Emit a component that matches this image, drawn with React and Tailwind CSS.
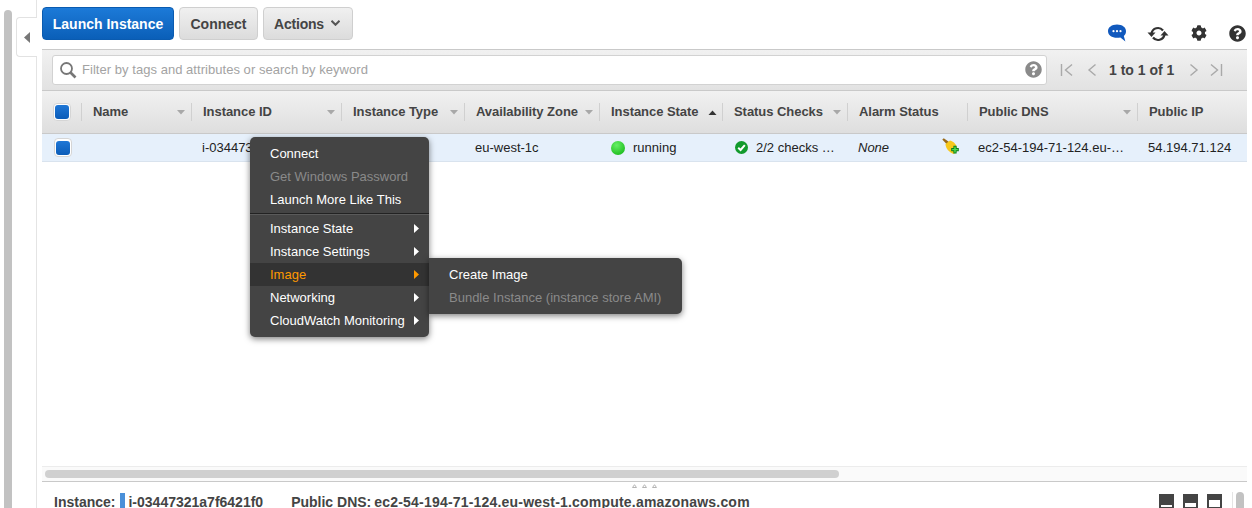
import React from "react";
import { FaCog, FaQuestionCircle } from "react-icons/fa";

const columns = [
  { label: "Name", w: "w-[110px]", sort: true },
  { label: "Instance ID", w: "w-[150px]", sort: true },
  { label: "Instance Type", w: "w-[123px]", sort: true },
  { label: "Availability Zone", w: "w-[135px]", sort: true },
  { label: "Instance State", w: "w-[123px]", sort: "up" },
  { label: "Status Checks", w: "w-[125px]", sort: true },
  { label: "Alarm Status", w: "w-[120px]" },
  { label: "Public DNS", w: "w-[170px]", sort: true },
  { label: "Public IP", w: "w-[110px]", last: true },
];

function Check({ outer }) {
  return (
    <div className={`${outer} flex items-center justify-center rounded-[4px] border border-[#d5d5d5] bg-white`}>
      <div className="h-[14px] w-[14px] rounded-[3px] bg-gradient-to-b from-[#1f77d6] to-[#0b5cb8]" />
    </div>
  );
}

function Sort({ up }) {
  return (
    <svg width="9" height="5" viewBox="0 0 9 5" className="shrink-0">
      <path d={up ? "M0.5 5 L4.5 0.5 L8.5 5Z" : "M0 0 L8 0 L4 4.5Z"} fill={up ? "#333" : "#a8a8a8"} />
    </svg>
  );
}

function Arrow({ color = "#fff" }) {
  return (
    <svg width="5" height="9" viewBox="0 0 5 9" className="shrink-0">
      <path d="M0 0 L5 4.5 L0 9Z" fill={color} />
    </svg>
  );
}

function MenuItem({ children, disabled, arrow, active }) {
  return (
    <div
      className={`flex h-[23px] items-center pl-[20px] pr-[10px] ${active ? "bg-[#333333]" : ""} ${
        active ? "text-[#ff9900]" : disabled ? "text-[#8a8a8a]" : "text-white"
      }`}
    >
      <span className="flex-1 whitespace-nowrap">{children}</span>
      {arrow && <Arrow color={active ? "#ff9900" : "#fff"} />}
    </div>
  );
}

function Pager({ d }) {
  return (
    <svg width="14" height="14" viewBox="0 0 14 14" fill="none" stroke="#a9a9a9" strokeWidth="1.4">
      <path d={d} />
    </svg>
  );
}

function Layout({ h }) {
  return (
    <div className="flex h-[14px] w-[15px] items-end justify-center bg-[#444444] pb-[1px]">
      <div className={`${h} w-[11px] bg-white`} />
    </div>
  );
}

export default function App() {
  return (
    <div className="flex h-[508px] w-[1252px] overflow-hidden bg-white font-['Liberation_Sans',Arial,sans-serif] text-[13px] text-[#444444]">
      <div className="ml-[4px] mt-[10px] h-[498px] w-[8px] shrink-0 rounded-t-[4px] bg-[#c2c2c2]" />
      <div className="w-[25px] shrink-0 border-r border-[#e4e4e4] pt-[17px] pl-[4px]">
        <div className="flex h-[40px] w-[21px] items-center justify-center rounded-l-[4px] border border-r-0 border-[#e2e2e2] bg-white">
          <svg width="6" height="11" viewBox="0 0 6 11">
            <path d="M6 0 L0 5.5 L6 11Z" fill="#777" />
          </svg>
        </div>
      </div>
      <div className="ml-[5px] flex w-[1205px] shrink-0 flex-col">
        {/* top toolbar */}
        <div className="flex h-[49px] shrink-0 items-start pt-[7px]">
          <button className="flex h-[33px] w-[132px] items-center justify-center rounded-[4px] border border-[#0a5bb0] bg-gradient-to-b from-[#1c7ad8] to-[#0a5fb8] pt-[1px] text-[14px] font-bold text-white">
            Launch Instance
          </button>
          <button className="ml-[5px] flex h-[33px] w-[79px] items-center justify-center rounded-[4px] border border-[#cfcfcf] bg-gradient-to-b from-[#f0f0f0] to-[#dcdcdc] pt-[1px] text-[14px] font-bold text-[#444444]">
            Connect
          </button>
          <button className="ml-[5px] flex h-[33px] w-[90px] items-center justify-center gap-[7px] rounded-[4px] border border-[#cfcfcf] bg-gradient-to-b from-[#f0f0f0] to-[#dcdcdc] pr-[2px] pt-[1px] text-[14px] font-bold text-[#444444]">
            <span className="tracking-[-0.2px]">Actions</span>
            <svg width="9" height="6" viewBox="0 0 9 6" fill="none" stroke="#555" strokeWidth="2" className="mb-[2px]">
              <path d="M0.5 0.8 L4.5 4.8 L8.5 0.8" />
            </svg>
          </button>
          <div className="ml-auto mt-[16px] flex items-center">
            <svg width="20" height="18" viewBox="0 0 20 18" className="mr-[20px]">
              <path d="M10 0.5C4.8 0.5 1 3.3 1 7.2 C1 11 4.8 13.8 10 13.8 C11.2 13.8 12.4 13.7 13.4 13.4 L18.4 17.6 L16.8 12 C18.2 10.8 19 9.1 19 7.2 C19 3.3 15.2 0.5 10 0.5Z" fill="#1159bd" />
              <circle cx="6.5" cy="7.2" r="1.1" fill="#fff" />
              <circle cx="10" cy="7.2" r="1.1" fill="#fff" />
              <circle cx="13.5" cy="7.2" r="1.1" fill="#fff" />
            </svg>
            <svg width="22" height="18" viewBox="0 0 22 18" fill="none" className="mr-[22px] mt-[2px]">
              <path d="M4.5 8.5 A6.5 6.5 0 0 1 16 5.5" stroke="#333" strokeWidth="2.2" />
              <path d="M17.5 9.5 A6.5 6.5 0 0 1 6 12.5" stroke="#333" strokeWidth="2.2" />
              <path d="M0.5 7.5 L8.5 7.5 L4.5 12Z" fill="#333" />
              <path d="M13.5 10.5 L21.5 10.5 L17.5 6Z" fill="#333" />
            </svg>
            <FaCog size={16} color="#333" className="mr-[22px]" />
            <FaQuestionCircle size={17} color="#333" className="mr-px" />
          </div>
        </div>

        {/* filter bar */}
        <div className="flex h-[41px] shrink-0 items-center border-t border-[#c9c9c9] bg-gradient-to-b from-[#f1f1f1] to-[#e2e2e2] pb-[1px] pl-[10px]">
          <div className="flex h-[30px] w-[995px] items-center rounded-[3px] border border-[#d2d2d2] bg-white pl-[6px] pr-[4px]">
            <svg width="18" height="18" viewBox="0 0 18 18" fill="none" stroke="#777" className="shrink-0">
              <circle cx="7.5" cy="7.5" r="5.5" strokeWidth="1.8" />
              <path d="M11.5 11.5 L16.5 16.5" strokeWidth="2.6" />
            </svg>
            <span className="ml-[5px] flex-1 tracking-[0.04px] text-[#a3a3a3]">Filter by tags and attributes or search by keyword</span>
            <FaQuestionCircle size={17} color="#8a8a8a" />
          </div>
          <div className="ml-[13px] flex items-center pt-[1px]">
            <Pager d="M1.5 1 V13 M12 1.5 L5.5 7 L12 12.5" />
            <div className="w-[11px]" />
            <Pager d="M10.5 1.5 L4 7 L10.5 12.5" />
            <span className="ml-[10px] w-[66px] whitespace-nowrap text-[14px] font-bold">1 to 1 of 1</span>
            <div className="w-[12px]" />
            <Pager d="M3.5 1.5 L10 7 L3.5 12.5" />
            <div className="w-[8px]" />
            <Pager d="M2 1.5 L8.5 7 L2 12.5 M12.5 1 V13" />
          </div>
        </div>

        {/* table header */}
        <div className="flex h-[44px] shrink-0 items-center border-y border-[#c9c9c9] bg-gradient-to-b from-[#f1f1f1] to-[#dedede]">
          <div className="flex h-[18px] w-[40px] shrink-0 items-center border-r border-[#d0d0d0] pl-[11px]">
            <Check outer="h-[18px] w-[18px]" />
          </div>
          {columns.map((c) => (
            <div
              key={c.label}
              className={`${c.w} flex h-[18px] shrink-0 items-center justify-between pl-[11px] pr-[5px] font-bold ${c.last ? "" : "border-r border-[#d0d0d0]"}`}
            >
              <span className="whitespace-nowrap tracking-[-0.05px]">{c.label}</span>
              {c.sort && <Sort up={c.sort === "up"} />}
            </div>
          ))}
        </div>

        {/* row */}
        <div className="flex h-[28px] shrink-0 items-center border-b border-[#d9e3ee] bg-[#e6f0fb] text-[#222222]">
          <div className="w-[40px] shrink-0 pl-[12px]">
            <Check outer="h-[19px] w-[18px]" />
          </div>
          <div className="w-[110px] shrink-0" />
          <div className="w-[150px] shrink-0 pl-[10px]">i-03447321a7f6421f0</div>
          <div className="w-[123px] shrink-0" />
          <div className="w-[135px] shrink-0 pl-[10px]">eu-west-1c</div>
          <div className="flex w-[123px] shrink-0 items-center pl-[11px]">
            <div className="h-[14px] w-[14px] rounded-full bg-[radial-gradient(circle_at_40%_30%,#66f066,#0cb00c)]" />
            <span className="ml-[8px]">running</span>
          </div>
          <div className="flex w-[125px] shrink-0 items-center pl-[12px]">
            <svg width="13" height="13" viewBox="0 0 13 13">
              <circle cx="6.5" cy="6.5" r="6.5" fill="#129a2c" />
              <path d="M3.2 6.8 L5.6 9 L9.8 4.2" fill="none" stroke="#fff" strokeWidth="2" />
            </svg>
            <span className="ml-[8px] whitespace-nowrap">2/2 checks …</span>
          </div>
          <div className="flex w-[120px] shrink-0 items-center justify-between pl-[10px] pr-[9px]">
            <span className="italic">None</span>
            <svg width="17" height="17" viewBox="0 0 17 17" className="mt-[-2px]">
              <path d="M0.3 1.5 L1.8 0.2 L7 4 L5 6.5Z" fill="#9a6a1a" />
              <path d="M3.5 6 L8 2.5 C12 3.5 15 7 15 11 C15 13.5 13.5 15.5 11.5 16 C7.5 14.5 3.5 10.5 3.5 6Z" fill="#f7c81c" />
              <path d="M9.2 10 H11.4 V7.8 H14.6 V10 H16.8 V13.2 H14.6 V15.4 H11.4 V13.2 H9.2Z" fill="#0b7d1c" />
              <path d="M12.3 8.8 H13.7 V10.9 H15.8 V12.3 H13.7 V14.4 H12.3 V12.3 H10.2 V10.9 H12.3Z" fill="#4fe04f" />
            </svg>
          </div>
          <div className="w-[170px] shrink-0 whitespace-nowrap pl-[10px]">ec2-54-194-71-124.eu-…</div>
          <div className="w-[110px] shrink-0 pl-[10px]">54.194.71.124</div>
        </div>

        <div className="flex-1" />

        {/* horizontal scrollbar */}
        <div className="flex h-[16px] shrink-0 items-center border-y border-t-[#ececec] border-b-[#c9c9c9] bg-[#fafafa] pl-[3px]">
          <div className="h-[8px] w-[794px] rounded-[4px] bg-[#d0d0d0]" />
        </div>

        {/* bottom bar */}
        <div className="relative flex h-[26px] shrink-0 items-end">
          <div className="absolute left-[590px] top-[2px] flex gap-[5px]">
            {[0, 1, 2].map((i) => (
              <svg key={i} width="5" height="4" viewBox="0 0 5 4">
                <path d="M0.5 3.5 L2.5 0.7 L4.5 3.5Z" fill="none" stroke="#b5b5b5" />
              </svg>
            ))}
          </div>
          <div className="flex h-[15px] items-center pl-[12px] pt-[2px] text-[14px] font-bold leading-none">
            <span>Instance:</span>
            <div className="ml-[5px] mt-[-2px] h-[15px] w-[5px] bg-[#4a90d9]" />
            <span className="ml-[3px]">i-03447321a7f6421f0</span>
            <span className="ml-[28px]">Public DNS:</span>
            <span className="ml-[3px] tracking-[0.2px]">ec2-54-194-71-124.eu-west-1.compute.amazonaws.com</span>
          </div>
          <div className="ml-auto flex items-end">
            <div className="flex gap-[9px]">
              <Layout h="h-[2px]" />
              <Layout h="h-[4px]" />
              <Layout h="h-[7px]" />
            </div>
            <div className="ml-[10px] flex h-[16px] w-[15px] justify-center border-l border-[#e4e4e4]">
              <div className="h-[16px] w-[8px] rounded-t-[4px] bg-[#c2c2c2]" />
            </div>
          </div>
        </div>
      </div>

      {/* context menu */}
      <div className="absolute left-[250px] top-[137px] w-[179px] rounded-[5px] bg-[#444444] py-[5px] text-[13px] shadow-[0_2px_6px_rgba(0,0,0,0.5)]">
        <MenuItem>Connect</MenuItem>
        <MenuItem disabled>Get Windows Password</MenuItem>
        <MenuItem>Launch More Like This</MenuItem>
        <div className="mb-[3px] mt-[2px] h-px bg-[#222222] shadow-[0_1px_0_#5a5a5a]" />
        <MenuItem arrow>Instance State</MenuItem>
        <MenuItem arrow>Instance Settings</MenuItem>
        <MenuItem arrow active>Image</MenuItem>
        <MenuItem arrow>Networking</MenuItem>
        <MenuItem arrow>CloudWatch Monitoring</MenuItem>
      </div>
      <div className="absolute left-[429px] top-[258px] w-[253px] rounded-r-[5px] bg-[#444444] py-[5px] text-[13px] shadow-[0_2px_6px_rgba(0,0,0,0.5)]">
        <MenuItem>Create Image</MenuItem>
        <MenuItem disabled>Bundle Instance (instance store AMI)</MenuItem>
      </div>
    </div>
  );
}
